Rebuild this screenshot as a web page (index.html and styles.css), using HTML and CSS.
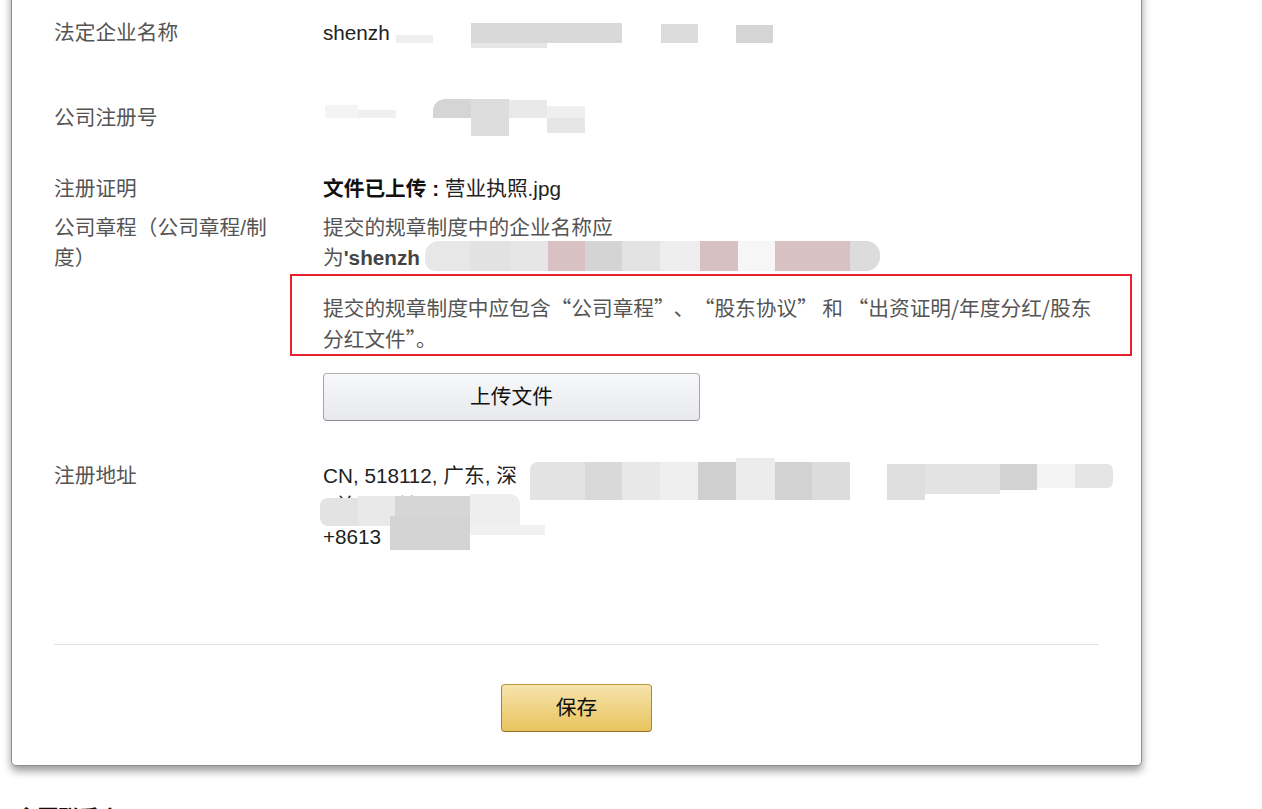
FILE: index.html
```html
<!DOCTYPE html>
<html lang="zh-CN">
<head>
<meta charset="utf-8">
<title>公司信息</title>
<link rel="stylesheet" href="styles.css">
</head>
<body>
<div class="card">
  <div class="row r1">
    <div class="label">法定企业名称</div>
    <div class="value">
      <div class="line">shenzh<span class="px n1"></span><span class="px n2"></span><span class="px n2b"></span><span class="px n3"></span><span class="px n4"></span></div>
    </div>
  </div>

  <div class="row r2">
    <div class="label">公司注册号</div>
    <div class="value">
      <div class="line">&nbsp;<span class="px g1"></span><span class="px g2"></span><span class="px g3"></span><span class="px g4"></span><span class="px g5"></span><span class="px g6"></span><span class="px g7"></span></div>
    </div>
  </div>

  <div class="row r3">
    <div class="label">注册证明</div>
    <div class="value">
      <div class="line"><b class="strong">文件已上传 :</b> 营业执照.jpg</div>
    </div>
  </div>

  <div class="row r4">
    <div class="label">公司章程（公司章程/制度）</div>
    <div class="value">
      <div class="line muted">提交的规章制度中的企业名称应</div>
      <div class="line muted">为<b class="namebold">'shenzh</b><span class="px s1"></span><span class="px s2"></span><span class="px s3"></span><span class="px s4"></span><span class="px s5"></span><span class="px s6"></span><span class="px s7"></span><span class="px s8"></span><span class="px s9"></span><span class="px s10"></span><span class="px s11"></span></div>
      <div class="note">提交的规章制度中应包含“公司章程<span class="gap-l">”</span><span class="gap-l">、</span>“股东协议<span class="gap-s">”</span><span class="gap-s">和</span>“出资证明/年度分红/股东<br>分红文件”。</div>
      <button class="btn-upload" type="button">上传文件</button>
    </div>
  </div>

  <div class="row r5">
    <div class="label">注册地址</div>
    <div class="value">
      <div class="line">CN, 518112, 广东, 深<span class="px a1"></span><span class="px a2"></span><span class="px a3"></span><span class="px a4"></span><span class="px a5"></span><span class="px a6"></span><span class="px a7"></span><span class="px a8"></span><span class="px a9"></span><span class="px a10"></span><span class="px a11"></span><span class="px a12"></span><span class="px a13"></span></div>
      <div class="line">2单元，单元20<span class="px b1"></span><span class="px b2"></span><span class="px b3"></span><span class="px b4"></span></div>
      <div class="line">+8613<span class="px c1"></span><span class="px c2"></span></div>
    </div>
  </div>

  <div class="divider"></div>

  <div class="actions">
    <button class="btn-save" type="button">保存</button>
  </div>
</div>

<div class="next-title">主要联系人</div>
</body>
</html>
```

FILE: styles.css
```css
html, body {
  margin: 0;
  padding: 0;
  background: #ffffff;
}

body {
  font-family: "Liberation Sans", "Noto Sans CJK SC", sans-serif;
  font-size: 20.7px;
  line-height: 30.5px;
  color: #222222;
  overflow: hidden;
  height: 809px;
}

.card {
  margin: -21px 0 0 11px;
  width: 1131px;
  box-sizing: border-box;
  border: 1px solid #8f8f8f;
  border-radius: 0 0 5px 5px;
  background: #ffffff;
  padding: 37.75px 42px 33px;
  box-shadow: 0 5px 9px rgba(0, 0, 0, 0.4);
}

.row {
  display: grid;
  grid-template-columns: 269px 1fr;
}

.label {
  color: #555555;
  padding-right: 40px;
}

.r2 { margin-top: 54.5px; }
.r3 { margin-top: 40.5px; }
.r4 { margin-top: 8.5px; }
.r5 { margin-top: 39.75px; }

.line {
  position: relative;
  white-space: nowrap;
  height: 30.5px;
}

.muted { color: #555555; }

.strong {
  font-weight: bold;
  color: #111111;
}

.namebold {
  font-weight: bold;
  color: #444444;
}

.note {
  margin: 0.25px 0 0 -33px;
  width: 842px;
  box-sizing: border-box;
  border: 2px solid #e8222c;
  padding: 16px 20px 0 31px;
  color: #555555;
  font-family: "Noto Sans CJK SC", sans-serif;
  line-height: 31px;
  white-space: nowrap;
}

.gap-l { margin-right: 9.5px; }
.gap-s { margin-right: 4.5px; }

.btn-upload {
  display: block;
  margin-top: 17px;
  width: 377px;
  height: 48px;
  padding: 0;
  border: 1px solid;
  border-color: #adb1b8 #a2a6ac #8d9096;
  border-radius: 4px;
  background: linear-gradient(#f7f8fa, #e7e9ec);
  font: inherit;
  color: #111111;
}

.divider {
  margin-top: 91.75px;
  border-top: 1px solid #e3e3e3;
}

.actions {
  display: flex;
  justify-content: center;
  padding-top: 39px;
}

.btn-save {
  width: 151px;
  height: 48px;
  padding: 0;
  border: 1px solid;
  border-color: #b7973f #a88734 #8e7228;
  border-radius: 4px;
  background: linear-gradient(#f6e3ad, #e9c45e);
  font: inherit;
  color: #111111;
}

.next-title {
  margin: 37px 0 0 17px;
  font-weight: bold;
  color: #111111;
}

/* redaction patches over blurred text */
.px {
  position: absolute;
  display: block;
}

.n1 { left: 73px; top: 17px; width: 37px; height: 8px; background: #efefef; }
.n2 { left: 148px; top: 5px; width: 151px; height: 20px; background: #d9d9d9; }
.n2b { left: 148px; top: 25px; width: 76px; height: 5px; background: #e6e6e6; }
.n3 { left: 338px; top: 6px; width: 37px; height: 19px; background: #dcdcdc; }
.n4 { left: 413px; top: 7px; width: 37px; height: 18px; background: #d5d5d5; }

.g1 { left: 2px; top: 2px; width: 33px; height: 13px; background: #f4f4f4; }
.g2 { left: 35px; top: 7px; width: 38px; height: 8px; background: #efefef; }
.g3 { left: 110px; top: -4px; width: 38px; height: 19px; background: #d5d5d5; border-radius: 12px 0 0 0; }
.g4 { left: 148px; top: -4px; width: 38px; height: 37px; background: #dddddd; }
.g5 { left: 186px; top: -3px; width: 38px; height: 18px; background: #e9e9e9; }
.g6 { left: 224px; top: 3px; width: 38px; height: 12px; background: #efefef; }
.g7 { left: 224px; top: 15px; width: 38px; height: 15px; background: #e6e6e6; }

.s1 { left: 102px; top: -2px; width: 45px; height: 30px; background: #e7e7e7; border-radius: 14px 0 0 10px; }
.s2 { left: 147px; top: -2px; width: 40px; height: 30px; background: #e2e2e2; }
.s3 { left: 187px; top: -2px; width: 38px; height: 30px; background: #e6e6e6; }
.s4 { left: 225px; top: -2px; width: 37px; height: 30px; background: #d9c0c2; }
.s5 { left: 262px; top: -2px; width: 37px; height: 30px; background: #d4d4d4; }
.s6 { left: 299px; top: -2px; width: 38px; height: 30px; background: #e3e3e3; }
.s7 { left: 337px; top: -2px; width: 40px; height: 30px; background: #eeeeee; }
.s8 { left: 377px; top: -2px; width: 38px; height: 30px; background: #d8bfc1; }
.s9 { left: 415px; top: -2px; width: 37px; height: 30px; background: #f6f6f6; }
.s10 { left: 452px; top: -2px; width: 75px; height: 30px; background: #d9c0c2; }
.s11 { left: 527px; top: -2px; width: 30px; height: 30px; background: #dcdcdc; border-radius: 0 14px 14px 0; }

.a1 { left: 207px; top: 1px; width: 55px; height: 38px; background: #e3e3e3; border-radius: 8px 0 0 0; }
.a2 { left: 262px; top: 1px; width: 37px; height: 38px; background: #d9d9d9; }
.a3 { left: 299px; top: 1px; width: 38px; height: 38px; background: #e8e8e8; }
.a4 { left: 337px; top: 1px; width: 38px; height: 38px; background: #efefef; }
.a5 { left: 375px; top: 1px; width: 38px; height: 38px; background: #cfcfcf; }
.a6 { left: 413px; top: -3px; width: 39px; height: 42px; background: #ececec; }
.a7 { left: 452px; top: 1px; width: 37px; height: 38px; background: #d2d2d2; }
.a8 { left: 489px; top: 1px; width: 38px; height: 38px; background: #dcdcdc; }
.a9 { left: 564px; top: 3px; width: 38px; height: 36px; background: #dedede; }
.a10 { left: 602px; top: 3px; width: 75px; height: 30px; background: #e3e3e3; }
.a11 { left: 677px; top: 3px; width: 37px; height: 26px; background: #d2d2d2; }
.a12 { left: 714px; top: 3px; width: 38px; height: 24px; background: #f3f3f3; }
.a13 { left: 752px; top: 3px; width: 38px; height: 24px; background: #e5e5e5; border-radius: 0 6px 6px 0; }

.b1 { left: -3px; top: 7px; width: 38px; height: 28px; background: #e3e3e3; border-radius: 8px 0 0 8px; }
.b2 { left: 35px; top: 5px; width: 37px; height: 30px; background: #e9e9e9; }
.b3 { left: 72px; top: 5px; width: 75px; height: 32px; background: #d6d6d6; }
.b4 { left: 147px; top: 3px; width: 50px; height: 36px; background: #eeeeee; border-radius: 0 10px 0 0; }

.c1 { left: 67px; top: -6px; width: 80px; height: 34px; background: #d4d4d4; }
.c2 { left: 147px; top: 3px; width: 75px; height: 10px; background: #f1f1f1; }
```
